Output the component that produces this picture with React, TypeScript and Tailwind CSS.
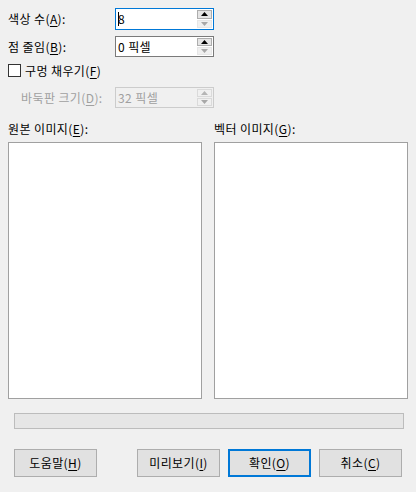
import React from "react";

const font = { fontFamily: '"Noto Sans CJK KR", "Noto Sans", sans-serif' };

const Mn = ({ c }: { c: string }) => <span className="underline underline-offset-2">{c}</span>;

const Spin = ({ value, focused, disabled, caret }: { value: string; focused?: boolean; disabled?: boolean; caret?: boolean }) => {
  const border = disabled ? "border-[#cccccc]" : focused ? "border-[#0078d7]" : "border-[#7a7a7a]";
  return (
    <div className={`flex h-full w-[99px] border ${border} ${disabled ? "bg-[#f0f0f0]" : "bg-white"}`}>
      <div className={`flex flex-1 items-center pl-[2px] text-[12px] ${disabled ? "text-[#a0a0a0]" : "text-black"}`}>
        {caret && <span className="mr-[-1px] inline-block h-[14px] w-[1px] bg-black" />}
        {value}
      </div>
      <div className="flex w-[16px] flex-col gap-[1px] py-[1px] pr-[1px]">
        <div className={`flex flex-1 items-center justify-center border ${disabled ? "border-[#dadada] bg-[#f0f0f0]" : "border-[#adadad] bg-[#e5e5e5]"}`}>
          <svg width="7" height="4" viewBox="0 0 7 4">
            <path d="M0 4 L3.5 0 L7 4 Z" fill={disabled ? "#b5b5b5" : "#000"} />
          </svg>
        </div>
        <div className={`flex flex-1 items-center justify-center border ${disabled ? "border-[#dadada]" : "border-[#e6e6e6]"} bg-[#f0f0f0]`}>
          <svg width="7" height="4" viewBox="0 0 7 4">
            <path d="M0 0 L3.5 4 L7 0 Z" fill="#a8a8a8" />
          </svg>
        </div>
      </div>
    </div>
  );
};

const Btn = ({ children, primary, ml }: { children: React.ReactNode; primary?: boolean; ml: string }) => (
  <div
    className={`flex h-[28px] w-[83px] items-center justify-center bg-[#e1e1e1] text-[12px] tracking-[0.4px] text-black ${ml} ${
      primary ? "border-2 border-[#0078d7]" : "border border-[#adadad]"
    }`}
  >
    {children}
  </div>
);

export default function App() {
  return (
    <div className="flex h-[492px] w-[416px] flex-col bg-[#f0f0f0] px-[8px] pt-[8px] text-black tracking-[0.4px]" style={font}>
      <div className="flex h-[22px] items-center">
        <div className="w-[107px] text-[12px]">색상 수(<Mn c="A" />):</div>
        <Spin value="8" focused caret />
      </div>
      <div className="mt-[6px] flex h-[21px] items-center">
        <div className="w-[107px] text-[12px]">점 줄임(<Mn c="B" />):</div>
        <Spin value="0 픽셀" />
      </div>
      <div className="mt-[7px] flex h-[13px] items-center">
        <div className="h-[13px] w-[13px] border border-[#333333] bg-white" />
        <div className="ml-[4px] text-[12px]">구멍 채우기(<Mn c="F" />)</div>
      </div>
      <div className="mt-[10px] flex h-[21px] items-center">
        <div className="w-[107px] pl-[13px] text-[12px] text-[#a0a0a0]">바둑판 크기(<Mn c="D" />):</div>
        <Spin value="32 픽셀" disabled />
      </div>
      <div className="mt-[13px] flex h-[15px] items-center gap-[12px] text-[12px]">
        <div className="w-[194px]">원본 이미지(<Mn c="E" />):</div>
        <div className="w-[194px]">벡터 이미지(<Mn c="G" />):</div>
      </div>
      <div className="mt-[6px] flex gap-[12px]">
        <div className="h-[257px] w-[194px] border border-[#a0a0a0] bg-white" />
        <div className="h-[257px] w-[194px] border border-[#a0a0a0] bg-white" />
      </div>
      <div className="ml-[6px] mt-[14px] h-[16px] w-[390px] border border-[#bcbcbc] bg-[#e6e6e6]" />
      <div className="mt-[20px] flex">
        <Btn ml="ml-[6px]">도움말(<Mn c="H" />)</Btn>
        <Btn ml="ml-[40px]">미리보기(<Mn c="I" />)</Btn>
        <Btn ml="ml-[8px]" primary>확인(<Mn c="O" />)</Btn>
        <Btn ml="ml-[8px]">취소(<Mn c="C" />)</Btn>
      </div>
    </div>
  );
}
